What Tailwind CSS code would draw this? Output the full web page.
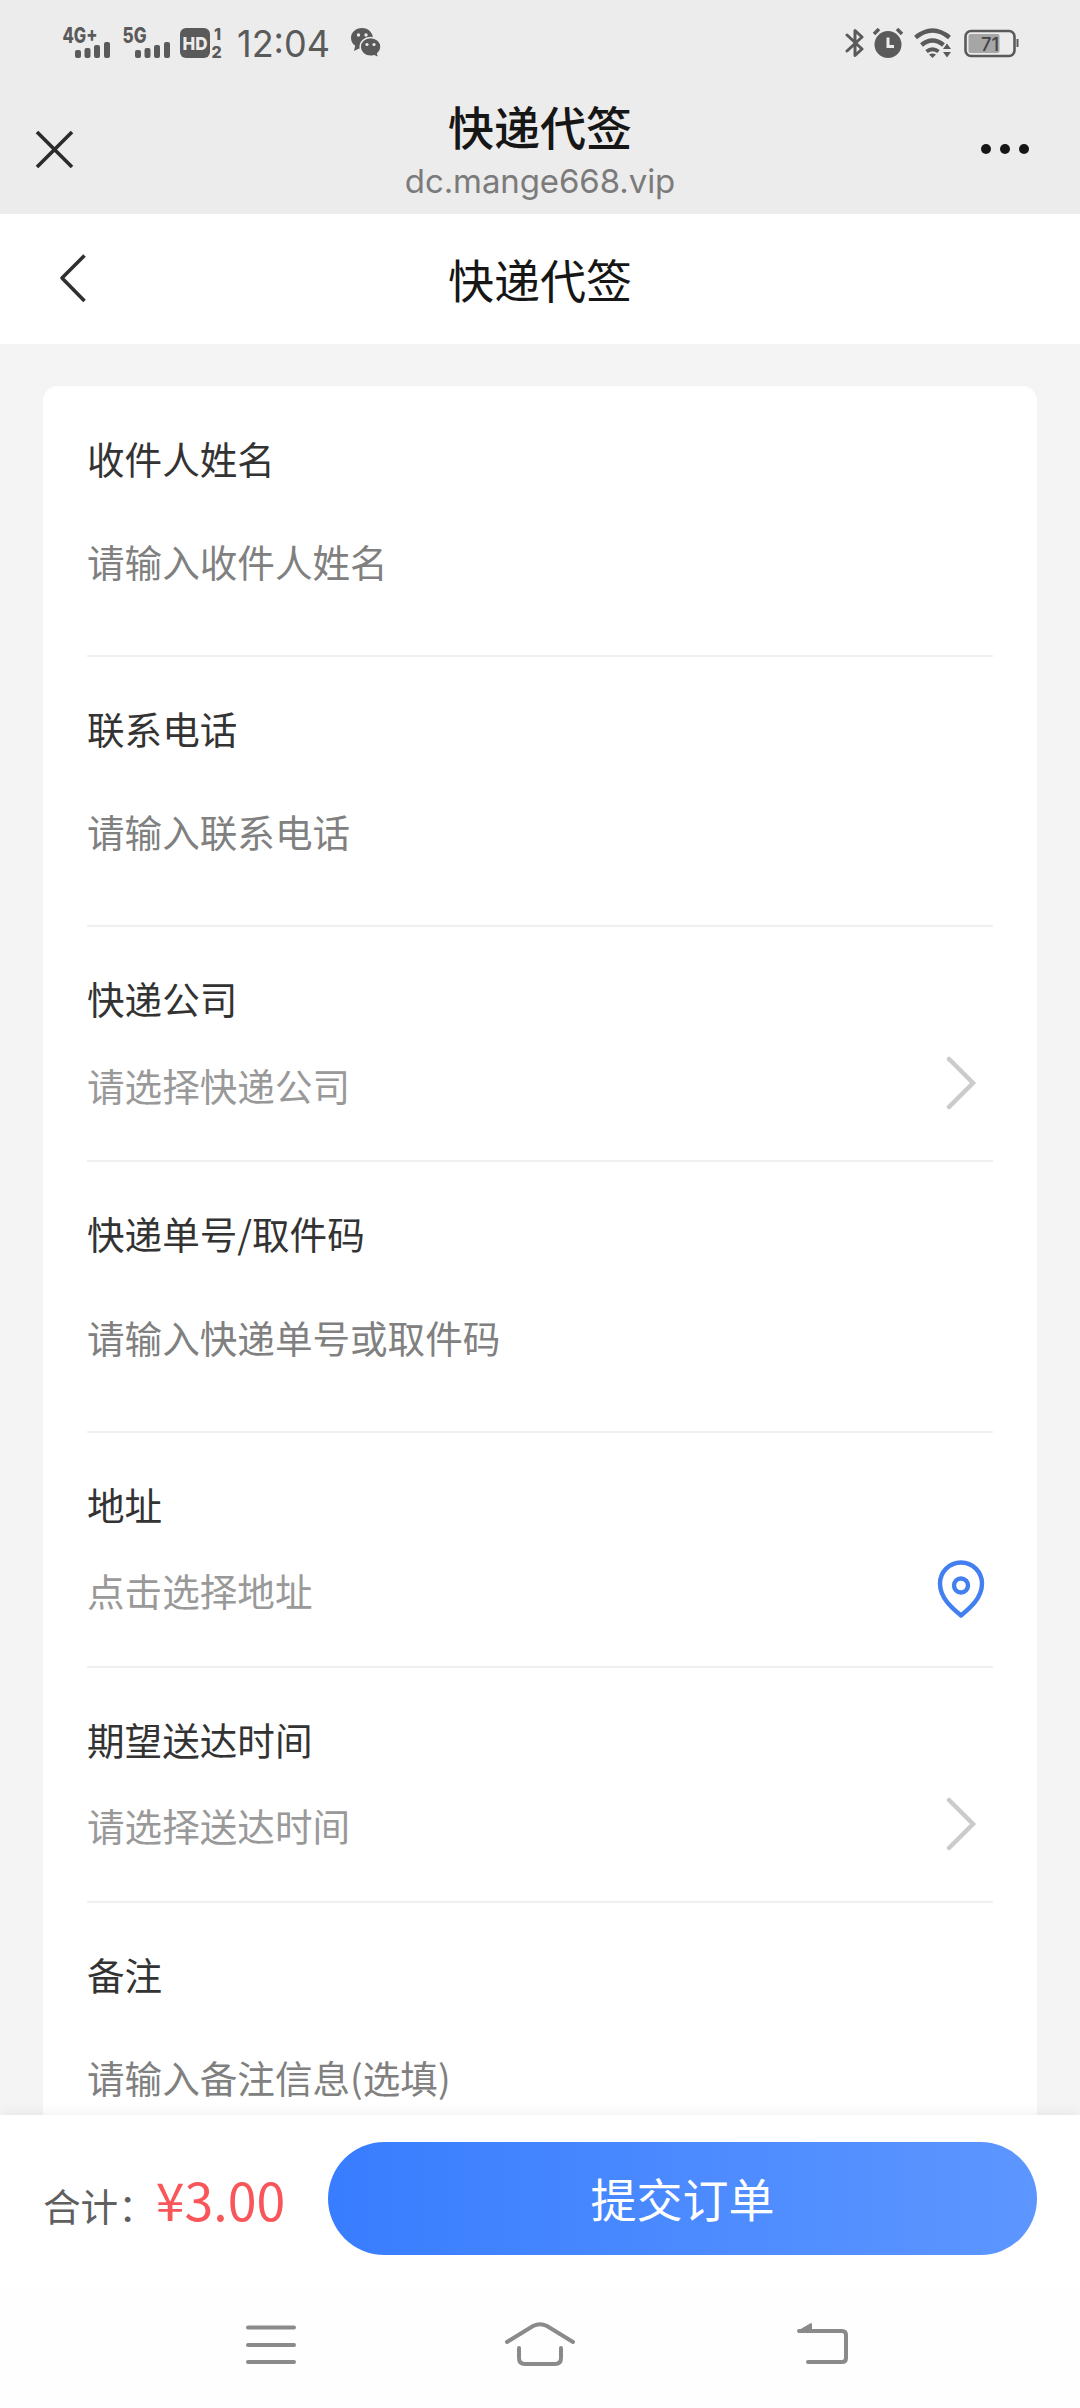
<!DOCTYPE html>
<html lang="zh-CN">
<head>
  <meta charset="UTF-8">
  <meta name="viewport" content="width=device-width, initial-scale=1.0">
  <title>快递代签</title>
  <script src="https://cdn.jsdelivr.net/npm/@tailwindcss/browser@4"></script>
</head>
<body class="bg-[#f4f4f4] font-['Noto_Sans_CJK_SC',sans-serif] text-[#333]">
  <div class="w-[1080px] h-[2408px] overflow-hidden flex flex-col">

    <!-- Status bar -->
    <div class="h-[84px] shrink-0 bg-[#ececec] flex items-center pt-[2px] pl-[62px] pr-[61px] text-[#5a5a5a] font-['Inter',sans-serif]">
      <svg class="w-[49px] h-[44px]" viewBox="0 -6 49 44" fill="currentColor">
        <text x="0.500" y="15.500" font-size="21" font-weight="800" textLength="35" lengthAdjust="spacingAndGlyphs">4G+</text>
        <rect x="13" y="23" width="6" height="8" rx="2"/><rect x="22.500" y="21" width="6" height="10" rx="2"/><rect x="32" y="18" width="6" height="13" rx="2"/><rect x="42" y="15" width="6" height="16" rx="2"/>
      </svg>
      <svg class="w-[49px] h-[44px] ml-[11px]" viewBox="0 -6 49 44" fill="currentColor">
        <text x="0.500" y="15.500" font-size="21" font-weight="800" textLength="24" lengthAdjust="spacingAndGlyphs">5G</text>
        <rect x="13" y="23" width="6" height="8" rx="2"/><rect x="22.500" y="21" width="6" height="10" rx="2"/><rect x="32" y="18" width="6" height="13" rx="2"/><rect x="42" y="15" width="6" height="16" rx="2"/>
      </svg>
      <svg class="w-[47px] h-[48px] ml-[9px]" viewBox="0 -8 47 48" fill="currentColor">
        <rect x="0" y="1" width="30" height="30" rx="6"/>
        <text x="2.500" y="22.500" font-size="18" font-weight="800" fill="#ececec" textLength="25" lengthAdjust="spacingAndGlyphs">HD</text>
        <text x="34" y="13" font-size="16" font-weight="800">1</text>
        <text x="31.500" y="31" font-size="16" font-weight="800">2</text>
      </svg>
      <svg class="w-[94px] h-[48px] ml-[10px]" viewBox="0 -4 94 48" fill="currentColor">
        <text x="0" y="33.500" font-size="37" textLength="93" lengthAdjust="spacingAndGlyphs">12:04</text>
      </svg>
      <svg class="w-[32px] h-[32px] ml-[19px]" viewBox="0 0 32 32" fill="currentColor">
        <path d="M12 1C5.500 1 1 5.500 1 11c0 3.200 1.600 6 4.200 7.800L4 24l5-2.600 3 .6c6.500 0 11-5 11-10.500S18.500 1 12 1z"/>
        <path d="M20.500 10.500C26.500 10.500 31 14.800 31 20c0 2.700-1.200 5-3.300 6.700L29 31l-4.800-2.300c-1.200.4-2.400.6-3.700.6-5.800 0-10.300-4.100-10.300-9.300s4.500-9.500 10.300-9.500z" stroke="#ececec" stroke-width="1.500"/>
        <circle cx="8.500" cy="8" r="1.700" fill="#ececec"/><circle cx="16" cy="8" r="1.700" fill="#ececec"/>
        <circle cx="17" cy="17.500" r="1.600" fill="#ececec"/><circle cx="24" cy="17.500" r="1.600" fill="#ececec"/>
      </svg>
      <div class="grow"></div>
      <svg class="w-[20px] h-[30px]" viewBox="0 0 20 30" fill="none" stroke="currentColor" stroke-width="3" stroke-linejoin="round" stroke-linecap="round">
        <path d="M2 7l15 14-7 6.500v-25L17 9 2 23"/>
      </svg>
      <svg class="w-[32px] h-[32px] ml-[7px]" viewBox="0 0 32 32" fill="none" stroke="currentColor">
        <circle cx="16" cy="17.500" r="13.500" fill="currentColor" stroke="none"/>
        <path d="M2 7l5-5M30 7l-5-5" stroke-width="3.500"/>
        <path d="M16 10.500v9h6" stroke="#ececec" stroke-width="3"/>
      </svg>
      <svg class="w-[38px] h-[32px] ml-[10px]" viewBox="0 0 38 32" fill="none" stroke="currentColor" stroke-width="4.500">
        <path d="M1.500 10.500q17-14 34 0M7.500 18q11-9 22 0"/>
        <path d="M12.500 24.500q6-4.500 12 0" stroke-width="4"/>
        <path d="M15 27.500q3.500-2 7 0l-3.500 3.500z" fill="currentColor" stroke="none"/>
        <path d="M29 22l4-5.500 4 5.500zM29 25l4 5.500 4-5.500z" fill="currentColor" stroke="none"/>
      </svg>
      <svg class="w-[55px] h-[36px] ml-[12px]" viewBox="0 -4 55 36">
        <rect x="1.500" y="2" width="49" height="25" rx="5.500" fill="none" stroke="currentColor" stroke-width="2.600"/>
        <rect x="4.500" y="5" width="31" height="19" rx="2" fill="#a6a6a6"/>
        <path d="M53.500 10v8" stroke="currentColor" stroke-width="2"/>
        <text x="17" y="21.500" font-size="19" font-weight="500" fill="#444" textLength="18" lengthAdjust="spacingAndGlyphs">71</text>
      </svg>
    </div>

    <!-- Browser title -->
    <div class="h-[130px] shrink-0 bg-[#ececec] flex items-center justify-between pl-[34px] pr-[50px]">
      <svg class="w-[41px] h-[41px]" viewBox="0 0 41 41" fill="none" stroke="#2b2b2b" stroke-width="3.600">
        <path d="M3 3l35 35M38 3L3 38"/>
      </svg>
      <div class="w-[400px] ml-[25px] text-center">
        <h1 class="text-[46px] leading-[56px] font-medium text-[#161616] -mt-[4px]">快递代签</h1>
        <p class="text-[33px] leading-[42px] mt-[7px] -mb-[5px] text-[#7b7b7b] font-['Inter',sans-serif] tracking-[-0.1px]">dc.mange668.vip</p>
      </div>
      <svg class="w-[50px] h-[12px]" viewBox="0 0 50 12" fill="#161616">
        <circle cx="6" cy="6" r="5"/><circle cx="25" cy="6" r="5"/><circle cx="44" cy="6" r="5"/>
      </svg>
    </div>

    <!-- Page header -->
    <div class="h-[130px] shrink-0 bg-white flex items-center pl-[58px] pr-[88px]">
      <svg class="w-[30px] h-[52px]" viewBox="0 0 30 52" fill="none" stroke="#2f2f2f" stroke-width="3.600" stroke-linejoin="round">
        <path d="M26.500 2.500L4 25l22.500 23"/>
      </svg>
      <h2 class="grow text-center text-[46px] leading-[60px] text-[#161616] -mt-[3px]">快递代签</h2>
    </div>

    <!-- Form -->
    <div class="grow min-h-0 px-[43px] pt-[42.4px]">
      <div class="bg-white rounded-t-[15px] px-[44px] h-[1800px] text-[37.6px] leading-[60px]">
        <div class="h-[270.4px] border-b-2 border-[#f0f0f0] pt-[41.5px]">
          <p>收件人姓名</p>
          <p class="mt-[43px] text-[#808080]">请输入收件人姓名</p>
        </div>
        <div class="h-[270.4px] border-b-2 border-[#f0f0f0] pt-[41px]">
          <p>联系电话</p>
          <p class="mt-[43.5px] text-[#808080]">请输入联系电话</p>
        </div>
        <div class="h-[235px] border-b-2 border-[#f0f0f0] pt-[41px]">
          <p>快递公司</p>
          <div class="mt-[26.5px] flex items-center justify-between pr-[16px]">
            <p class="text-[#999]">请选择快递公司</p>
            <svg class="w-[32px] h-[54px] -mt-[3px]" viewBox="0 0 32 54" fill="none" stroke="#cbcbcb" stroke-width="4.500" stroke-linecap="round">
              <path d="M4 3l24 24L4 51"/>
            </svg>
          </div>
        </div>
        <div class="h-[270.4px] border-b-2 border-[#f0f0f0] pt-[41px]">
          <p>快递单号/取件码</p>
          <p class="mt-[43.5px] text-[#808080]">请输入快递单号或取件码</p>
        </div>
        <div class="h-[235px] border-b-2 border-[#f0f0f0] pt-[41px]">
          <p>地址</p>
          <div class="mt-[26.5px] flex items-center justify-between pr-[8px]">
            <p class="text-[#999]">点击选择地址</p>
            <svg class="w-[48px] h-[58px] -mt-[3px]" viewBox="0 0 48 58" fill="none" stroke="#427ff0" stroke-width="4.400" stroke-linejoin="round">
              <path d="M24 55.500C15 48 3 38 3 23.500a21 21 0 0 1 42 0C45 38 33 48 24 55.500z"/>
              <circle cx="24" cy="25.500" r="7"/>
            </svg>
          </div>
        </div>
        <div class="h-[235px] border-b-2 border-[#f0f0f0] pt-[41px]">
          <p>期望送达时间</p>
          <div class="mt-[26.5px] flex items-center justify-between pr-[16px]">
            <p class="text-[#999]">请选择送达时间</p>
            <svg class="w-[32px] h-[54px] -mt-[3px]" viewBox="0 0 32 54" fill="none" stroke="#cbcbcb" stroke-width="4.500" stroke-linecap="round">
              <path d="M4 3l24 24L4 51"/>
            </svg>
          </div>
        </div>
        <div class="pt-[41px]">
          <p>备注</p>
          <p class="mt-[43.5px] text-[#808080]">请输入备注信息(选填)</p>
        </div>
      </div>
    </div>

    <!-- Submit bar -->
    <div class="relative h-[173px] shrink-0 bg-white shadow-[0_0_14px_rgba(0,0,0,0.08)] flex items-start pt-[27px] pl-[43px] pr-[43px]">
      <div class="w-[285px] h-[113px] flex items-baseline pt-[19px] text-[#5f5f5f]">
        <span class="text-[37.6px] leading-[76px]">合计：</span>
        <span class="text-[51.8px] leading-[76px] text-[#f9565a]">¥3.00</span>
      </div>
      <button class="grow h-[113px] rounded-full bg-linear-to-r from-[#387dff] to-[#5d96ff] text-white text-[46px] leading-[60px] pb-[4px]">提交订单</button>
    </div>

    <!-- System navigation -->
    <div class="relative h-[120px] shrink-0 bg-[#fefefe] flex pt-[32px] pl-[244px] text-[#8a8a8a]">
      <svg class="w-[54px] h-[50px]" viewBox="0 0 54 50" fill="none" stroke="currentColor" stroke-width="4" stroke-linecap="round">
        <path d="M4 7.500h46M4 25h46M4 42h46"/>
      </svg>
      <svg class="w-[74px] h-[50px] ml-[205px]" viewBox="0 0 74 50" fill="none" stroke="currentColor" stroke-width="4" stroke-linecap="round">
        <path d="M4 22L30 6q7-3.500 14 0l26 16"/>
        <path d="M16 28v10q0 6 6 6h30q6 0 6-6V28"/>
      </svg>
      <svg class="w-[56px] h-[50px] ml-[218px]" viewBox="0 0 56 50" fill="none" stroke="currentColor" stroke-width="4" stroke-linecap="round" stroke-linejoin="round">
        <path d="M4 11h43q4 0 4 4v23q0 4-4 4H13"/>
        <path d="M4 11l12-7v7z" fill="currentColor" stroke-width="2"/>
      </svg>
    </div>
  </div>
</body>
</html>
